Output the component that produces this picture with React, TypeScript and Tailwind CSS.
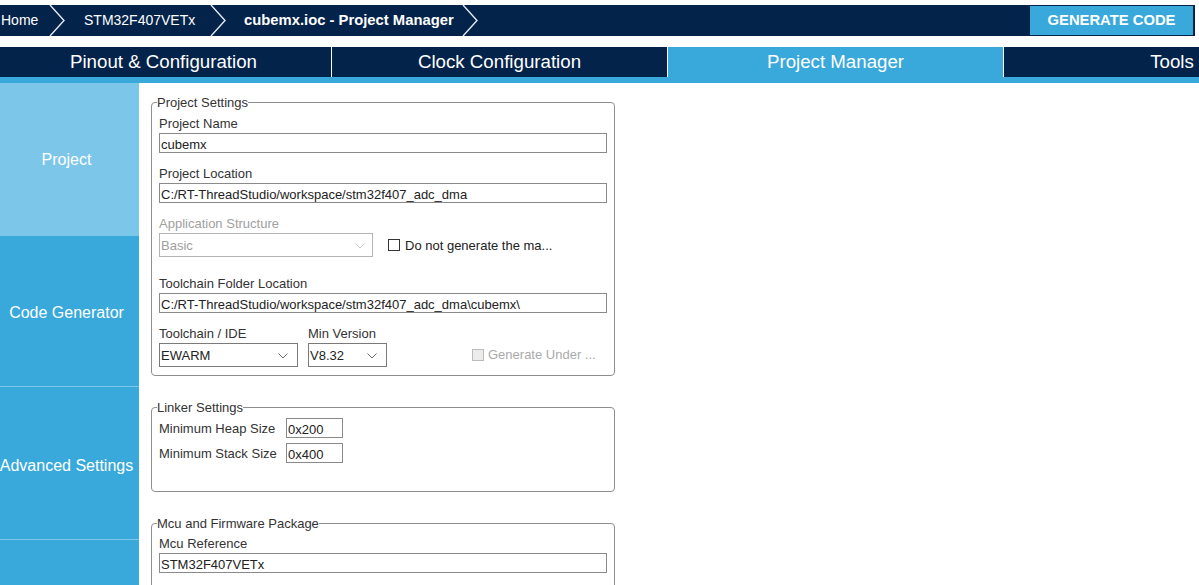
import React from "react";

const NAVY = "bg-[#03234b]";

function Chevron() {
  return (
    <svg width="16" height="31" viewBox="0 0 16 31" className="shrink-0">
      <polyline points="1,0 15,15.5 1,31" fill="none" stroke="#e6eaf0" strokeWidth="1.4" />
    </svg>
  );
}

function SelChevron({ color = "#6b6b6b" }: { color?: string }) {
  return (
    <svg width="10" height="6" viewBox="0 0 10 6">
      <polyline points="0.5,0.5 5,5 9.5,0.5" fill="none" stroke={color} strokeWidth="1" />
    </svg>
  );
}

function Label({ children, className = "" }: { children: React.ReactNode; className?: string }) {
  return <div className={`h-[15px] leading-[15px] text-[13px] text-[#333] whitespace-nowrap ${className}`}>{children}</div>;
}

function TextBox({ value, w }: { value: string; w: string }) {
  return (
    <div className={`${w} h-[20px] border border-[#8a8a8a] bg-white text-[13px] leading-[19px] pt-[1px] text-[#222] pl-[1px] whitespace-nowrap overflow-hidden`}>
      {value}
    </div>
  );
}

function Fieldset({ legend, children, className = "" }: { legend: string; children: React.ReactNode; className?: string }) {
  return (
    <fieldset className={`ml-[12px] w-[464px] border border-[#8e8e8e] rounded-[4px] pl-[5px] pr-[6px] ${className}`}>
      <legend className="text-[13px] leading-[15px] text-[#333] px-0">{legend}</legend>
      <div className="pl-[2px]">{children}</div>
    </fieldset>
  );
}

export default function App() {
  return (
    <div className="w-[1199px] h-[585px] overflow-hidden bg-white font-['Liberation_Sans',Arial,sans-serif]">
      {/* top breadcrumb bar */}
      <div className="pt-[5px]">
        <div className={`${NAVY} h-[31px] mr-[4px] flex items-center text-white text-[14px]`}>
          <div className="w-[49px] pl-[1px] whitespace-nowrap">Home</div>
          <Chevron />
          <div className="w-[145px] pl-[19px] whitespace-nowrap">STM32F407VETx</div>
          <Chevron />
          <div className="w-[236px] pl-[18px] whitespace-nowrap font-bold text-[14.8px]">cubemx.ioc - Project Manager</div>
          <Chevron />
          <div className="flex-1" />
          <div className="w-[163px] h-[29px] bg-[#39a9dc] flex items-center justify-center font-bold text-[14.8px] text-white mr-[2px]">
            GENERATE CODE
          </div>
        </div>
      </div>

      {/* tabs */}
      <div className="mt-[11px] h-[30px] flex overflow-hidden text-white text-[18.7px]">
        <div className={`${NAVY} ml-[-4px] w-[336px] shrink-0 border-r border-white flex items-center justify-center pt-[1px]`}>Pinout &amp; Configuration</div>
        <div className={`${NAVY} w-[336px] shrink-0 border-r border-white flex items-center justify-center pt-[1px]`}>Clock Configuration</div>
        <div className="bg-[#39a9dc] w-[336px] shrink-0 border-r border-white flex items-center justify-center pt-[1px]">Project Manager</div>
        <div className={`${NAVY} w-[336px] shrink-0 flex items-center justify-center pt-[1px]`}>Tools</div>
      </div>
      <div className="h-[6px] bg-[#39a9dc]" />

      {/* body */}
      <div className="flex h-[502px]">
        <div className="w-[139px] shrink-0 bg-[#39a9dc] text-white text-[16px] flex flex-col">
          <div className="h-[153px] bg-[#7cc6ea] flex items-center justify-center pr-[6px]">Project</div>
          <div className="h-[151px] border-b border-[#7fc8eb] flex items-center justify-center pr-[6px] pt-[3px]">Code Generator</div>
          <div className="h-[153px] border-b border-[#7fc8eb] flex items-center justify-center whitespace-nowrap pr-[6px] pt-[5px]">Advanced Settings</div>
          <div className="flex-1" />
        </div>

        <div className="flex-1 flex flex-col">
          <Fieldset legend="Project Settings" className="mt-[12px] pb-[8px]">
            <Label className="mt-[6px]">Project Name</Label>
            <div className="mt-[2px]"><TextBox value="cubemx" w="w-[448px]" /></div>
            <Label className="mt-[13px]">Project Location</Label>
            <div className="mt-[2px]"><TextBox value="C:/RT-ThreadStudio/workspace/stm32f407_adc_dma" w="w-[448px]" /></div>
            <Label className="mt-[13px] !text-[#a0a0a0]">Application Structure</Label>
            <div className="mt-[2px] flex items-center">
              <div className="w-[214px] h-[24px] border border-[#b4b4b4] flex items-center justify-between pl-[1px] pr-[7px] pt-[1px] text-[13px] text-[#a0a0a0]">
                <span>Basic</span>
                <SelChevron color="#c4c4c4" />
              </div>
              <div className="ml-[15px] w-[12px] h-[12px] border border-[#333] bg-white" />
              <span className="ml-[5px] pt-[1px] text-[13px] text-[#222] whitespace-nowrap">Do not generate the ma...</span>
            </div>
            <Label className="mt-[19px]">Toolchain Folder Location</Label>
            <div className="mt-[2px]"><TextBox value="C:/RT-ThreadStudio/workspace/stm32f407_adc_dma\cubemx\" w="w-[448px]" /></div>
            <div className="mt-[13px] flex">
              <div className="w-[149px]">
                <Label>Toolchain / IDE</Label>
                <div className="mt-[2px] w-[139px] h-[24px] border border-[#7a7a7a] flex items-center justify-between pl-[1px] pr-[9px] pt-[1px] text-[13px] text-[#222]">
                  <span>EWARM</span>
                  <SelChevron />
                </div>
              </div>
              <div className="w-[164px]">
                <Label>Min Version</Label>
                <div className="mt-[2px] w-[79px] h-[24px] border border-[#7a7a7a] flex items-center justify-between pl-[1px] pr-[9px] pt-[1px] text-[13px] text-[#222]">
                  <span>V8.32</span>
                  <SelChevron />
                </div>
              </div>
              <div className="pt-[21px] flex items-start">
                <div className="mt-[2px] w-[12px] h-[12px] border border-[#bcbcbc] bg-[#ececec]" />
                <span className="ml-[4px] text-[13px] leading-[15px] text-[#aaa] whitespace-nowrap">Generate Under ...</span>
              </div>
            </div>
          </Fieldset>

          <Fieldset legend="Linker Settings" className="mt-[24px] pb-[28px]">
            <div className="mt-[3px] h-[20px] flex items-center">
              <div className="w-[127px] h-[20px] text-[13px] leading-[19px] pt-[1px] text-[#333] whitespace-nowrap">Minimum Heap Size</div>
              <TextBox value="0x200" w="w-[57px]" />
            </div>
            <div className="mt-[5px] h-[20px] flex items-center">
              <div className="w-[127px] h-[20px] text-[13px] leading-[19px] pt-[1px] text-[#333] whitespace-nowrap">Minimum Stack Size</div>
              <TextBox value="0x400" w="w-[57px]" />
            </div>
          </Fieldset>

          <Fieldset legend="Mcu and Firmware Package" className="mt-[24px] pb-[20px]">
            <Label className="mt-[5px]">Mcu Reference</Label>
            <div className="mt-[2px]"><TextBox value="STM32F407VETx" w="w-[448px]" /></div>
          </Fieldset>
        </div>
      </div>
    </div>
  );
}
